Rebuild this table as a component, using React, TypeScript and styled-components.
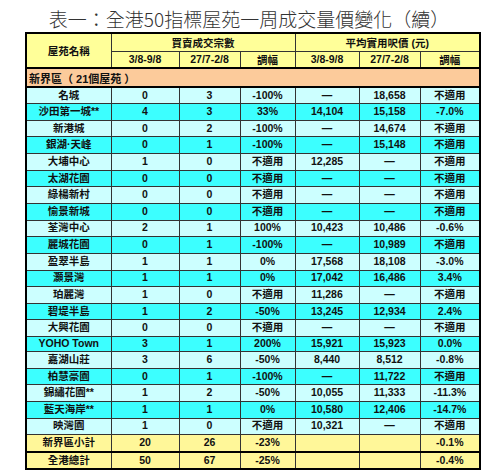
import React from "react";
import styled, { createGlobalStyle } from "styled-components";

const GlobalStyle = createGlobalStyle`
  html, body {
    margin: 0;
    padding: 0;
    background: #fff;
  }
  body {
    font-family: "Liberation Sans", Arial, "Noto Sans CJK TC", sans-serif;
  }
`;

const Page = styled.div`
  width: 498px;
  height: 476px;
  overflow: hidden;
`;

const Title = styled.h1`
  margin: 8px 0 2px;
  font-family: "Noto Sans CJK TC", sans-serif;
  font-weight: 300;
  font-size: 19px;
  line-height: 22px;
  color: #333;
  text-align: center;
`;

const TableWrap = styled.div`
  padding-left: 25px;
`;

const Table = styled.table`
  border-collapse: collapse;
  table-layout: fixed;
  width: 456px;
  border: 2px solid #000;
  font-size: 10.5px;
  font-weight: 700;
  color: #111;
`;

const Col = styled.col<{ $w: number }>`
  width: ${(p) => p.$w}px;
`;

type Tone = "head" | "region" | "light" | "dark" | "sum";

const toneColors: Record<Tone, string> = {
  head: "#ffff99",
  region: "#fccb9b",
  light: "#ccffff",
  dark: "#3cffff",
  sum: "#fff799",
};

const Row = styled.tr<{ $tone: Tone; $h: number; $thick?: boolean }>`
  height: ${(p) => p.$h}px;
  background: ${(p) => toneColors[p.$tone]};
  border-bottom: ${(p) => (p.$thick ? "2px solid #000" : "1px solid #333")};
`;

const HeadCell = styled.th`
  padding: 0;
  font-weight: 700;
  text-align: center;
  vertical-align: middle;
  border: 1px solid #333;
  white-space: nowrap;
`;

const Cell = styled.td`
  padding: 0 0 1px;
  text-align: center;
  vertical-align: middle;
  border-left: 1px solid #333;
  white-space: nowrap;
  line-height: 13px;
`;

const RegionCell = styled.td`
  padding: 1px 0 0 2px;
  text-align: left;
  vertical-align: middle;
  font-size: 11px;
`;

type Estate = [string, string, string, string, string, string, string];

const estates: Estate[] = [
  ["名城", "0", "3", "-100%", "—", "18,658", "不適用"],
  ["沙田第一城**", "4", "3", "33%", "14,104", "15,158", "-7.0%"],
  ["新港城", "0", "2", "-100%", "—", "14,674", "不適用"],
  ["銀湖·天峰", "0", "1", "-100%", "—", "15,148", "不適用"],
  ["大埔中心", "1", "0", "不適用", "12,285", "—", "不適用"],
  ["太湖花園", "0", "0", "不適用", "—", "—", "不適用"],
  ["綠楊新村", "0", "0", "不適用", "—", "—", "不適用"],
  ["愉景新城", "0", "0", "不適用", "—", "—", "不適用"],
  ["荃灣中心", "2", "1", "100%", "10,423", "10,486", "-0.6%"],
  ["麗城花園", "0", "1", "-100%", "—", "10,989", "不適用"],
  ["盈翠半島", "1", "1", "0%", "17,568", "18,108", "-3.0%"],
  ["灝景灣", "1", "1", "0%", "17,042", "16,486", "3.4%"],
  ["珀麗灣", "1", "0", "不適用", "11,286", "—", "不適用"],
  ["碧堤半島", "1", "2", "-50%", "13,245", "12,934", "2.4%"],
  ["大興花園", "0", "0", "不適用", "—", "—", "不適用"],
  ["YOHO Town", "3", "1", "200%", "15,921", "15,923", "0.0%"],
  ["嘉湖山莊", "3", "6", "-50%", "8,440", "8,512", "-0.8%"],
  ["柏慧豪園", "0", "1", "-100%", "—", "11,722", "不適用"],
  ["錦繡花園**", "1", "2", "-50%", "10,055", "11,333", "-11.3%"],
  ["藍天海岸**", "1", "1", "0%", "10,580", "12,406", "-14.7%"],
  ["映灣園", "1", "0", "不適用", "10,321", "—", "不適用"],
];

const totals: Estate[] = [
  ["新界區小計", "20", "26", "-23%", "", "", "-0.1%"],
  ["全港總計", "50", "67", "-25%", "", "", "-0.4%"],
];

const widths = [85, 68, 61, 55, 64, 61, 60];

export default function App() {
  return (
    <Page>
      <GlobalStyle />
      <Title>表一：全港50指標屋苑一周成交量價變化（續）</Title>
      <TableWrap>
        <Table>
          <colgroup>
            {widths.map((w, i) => (
              <Col key={i} $w={w} />
            ))}
          </colgroup>
          <thead>
            <Row $tone="head" $h={18}>
              <HeadCell rowSpan={2}>屋苑名稱</HeadCell>
              <HeadCell colSpan={3}>買賣成交宗數</HeadCell>
              <HeadCell colSpan={3}>平均實用呎價 (元)</HeadCell>
            </Row>
            <Row $tone="head" $h={16.5} $thick>
              <HeadCell>3/8-9/8</HeadCell>
              <HeadCell>27/7-2/8</HeadCell>
              <HeadCell>調幅</HeadCell>
              <HeadCell>3/8-9/8</HeadCell>
              <HeadCell>27/7-2/8</HeadCell>
              <HeadCell>調幅</HeadCell>
            </Row>
          </thead>
          <tbody>
            <Row $tone="region" $h={19.5} $thick>
              <RegionCell colSpan={7}>新界區（ 21個屋苑 ）</RegionCell>
            </Row>
            {estates.map((r, i) => (
              <Row
                key={r[0]}
                $tone={i % 2 === 0 ? "light" : "dark"}
                $h={r[0] === "YOHO Town" ? 12.6 : 16.65}
              >
                {r.map((v, j) => (
                  <Cell key={j}>{v}</Cell>
                ))}
              </Row>
            ))}
            {totals.map((r, i) => (
              <Row key={r[0]} $tone="sum" $h={17.2} $thick={i === 0}>
                {r.map((v, j) => (
                  <Cell key={j}>{v}</Cell>
                ))}
              </Row>
            ))}
          </tbody>
        </Table>
      </TableWrap>
    </Page>
  );
}
